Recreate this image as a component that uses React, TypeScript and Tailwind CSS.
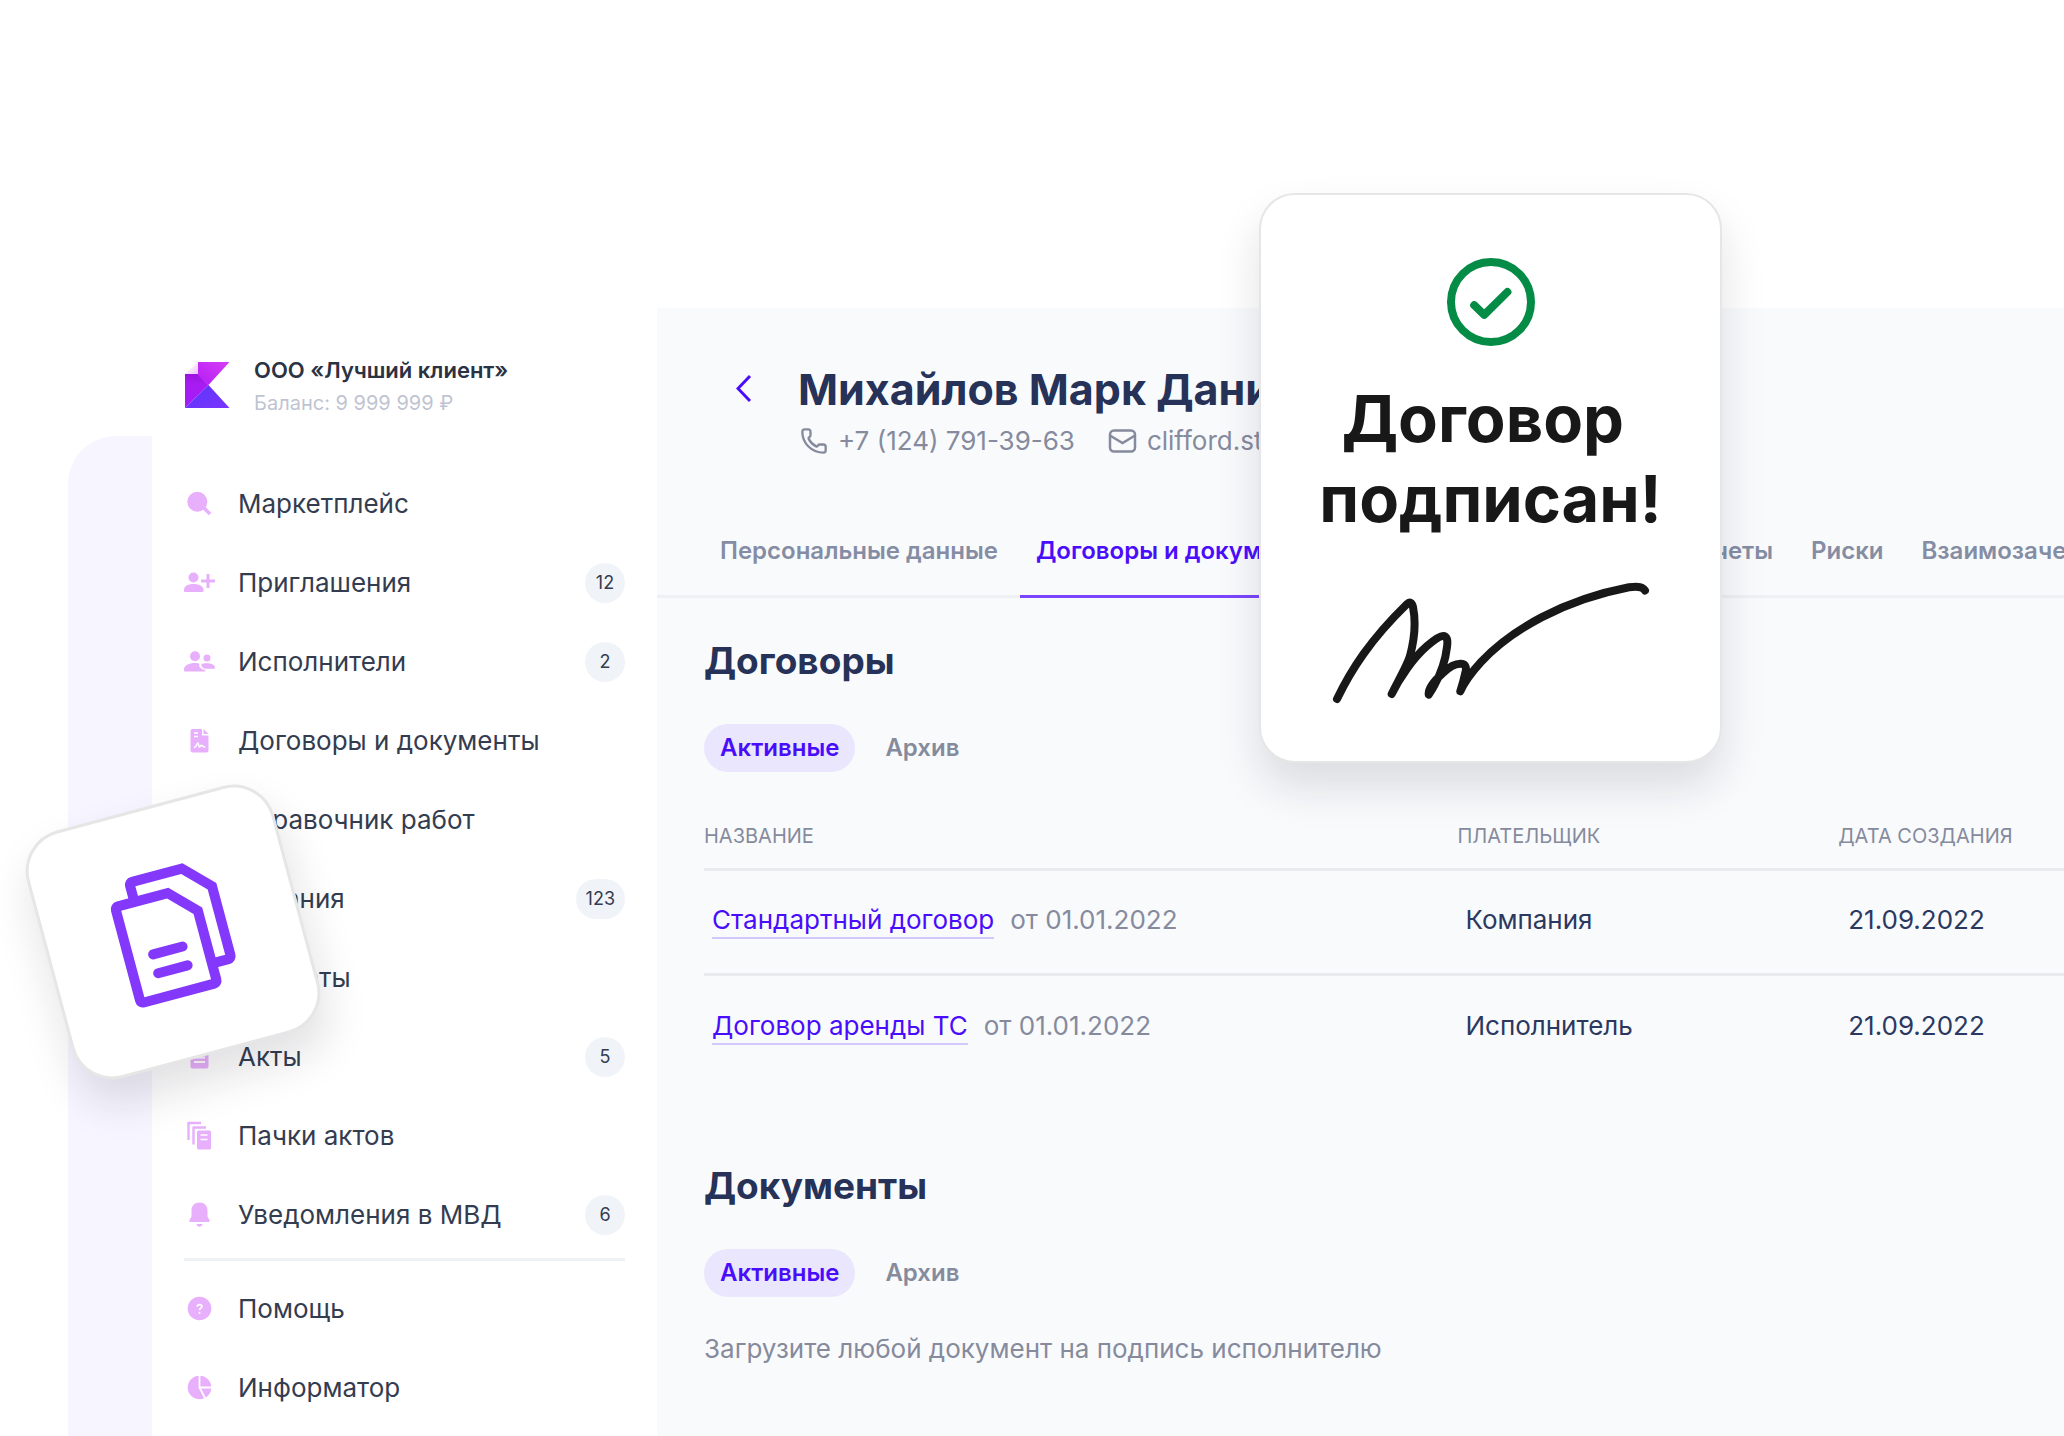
import type { ReactNode } from 'react';
import { Phone } from 'lucide-react';

interface NavItem {
    label: string;
    icon: ReactNode;
    count?: number;
}

interface Contract {
    name: string;
    from: string;
    payer: string;
    created: string;
}

const fileIcon = (
    <>
        <path d="M8.500 4H18v6.500h6.500v15a2 2 0 0 1-2 2h-14a2 2 0 0 1-2-2V6a2 2 0 0 1 2-2z" />
        <path d="M19.500 4l5 5h-5z" />
        <path d="M10 21h11M10 16.500h11" stroke="#fff" strokeWidth="2" />
    </>
);

const navItems: NavItem[] = [
    {
        label: 'Маркетплейс',
        icon: (
            <>
                <circle cx="13.300" cy="13.700" r="10" />
                <path d="M20 20l6 6" stroke="currentColor" strokeWidth="3.500" />
            </>
        )
    },
    {
        label: 'Приглашения',
        count: 12,
        icon: (
            <>
                <circle cx="9.500" cy="10.500" r="5" />
                <path d="M0 23c0-4 4-6 9.500-6s10 2 10 6v1a1 1 0 0 1-1 1H1a1 1 0 0 1-1-1z" />
                <path d="M24 7v14M17 14h14" stroke="currentColor" strokeWidth="3" />
            </>
        )
    },
    {
        label: 'Исполнители',
        count: 2,
        icon: (
            <>
                <circle cx="11" cy="10.300" r="5" />
                <circle cx="23" cy="12" r="3.500" />
                <path d="M0 23.500c0-4 5-6.500 11-6.500 2 0 3.500.3 4.500.7-1 2.800.5 5.300 5.500 6.300.7 1.300 0 1.500-1 1.500H1a1 1 0 0 1-1-1z" />
                <path d="M17.500 17.800c4-1.300 13.500-1 13.500 4 0 .6-.4 1-1 1h-8c-3 0-5-2.500-4.500-5z" />
            </>
        )
    },
    {
        label: 'Договоры и документы',
        icon: (
            <>
                <path d="M8.500 4H18v6.500h6.500v15a2 2 0 0 1-2 2h-14a2 2 0 0 1-2-2V6a2 2 0 0 1 2-2z" />
                <path d="M19.500 4l5 5h-5z" />
                <path
                    d="M10 8h4M10 11.500h4M10 22.500c2.500 0 2.800-4.500 3.800-4.500s.7 4 1.700 4 1-1.700 2-1.700 1 1.700 3.800 1.700"
                    stroke="#fff" strokeWidth="1.600" fill="none"
                />
            </>
        )
    },
    { label: 'Справочник работ', icon: fileIcon },
    { label: 'Задания', count: 123, icon: fileIcon },
    { label: 'Выплаты', icon: fileIcon },
    { label: 'Акты', count: 5, icon: fileIcon },
    {
        label: 'Пачки актов',
        icon: (
            <>
                <path d="M4.500 20V3h12.500M9.500 24.500V7.500h12.500" stroke="currentColor" strokeWidth="2.400" strokeLinejoin="round" fill="none" />
                <rect x="13" y="10.500" width="14" height="19" rx="1.500" />
                <path d="M16.500 15h7M16.500 19.500h7" stroke="#fff" strokeWidth="1.600" />
            </>
        )
    },
    {
        label: 'Уведомления в МВД',
        count: 6,
        icon: (
            <>
                <path d="M15.500 3.500c5 0 8 3.500 8 8v6l2 3.500c.5 1 0 2-1 2h-18c-1 0-1.500-1-1-2l2-3.500v-6c0-4.500 3-8 8-8z" />
                <path d="M12.500 25h6c-.5 1.800-1.600 2.700-3 2.700s-2.500-.9-3-2.700z" />
            </>
        )
    }
];

const extraItems: NavItem[] = [
    {
        label: 'Помощь',
        icon: (
            <>
                <circle cx="15.500" cy="15.500" r="11.800" />
                <path d="M13.300 13.800c0-3 4.600-2.800 4.600-.2 0 1.700-2.400 1.700-2.400 3.500M15.500 18.700v2" stroke="#fff" strokeWidth="1.700" fill="none" />
            </>
        )
    },
    {
        label: 'Информатор',
        icon: (
            <>
                <circle cx="15.500" cy="15.500" r="11.800" />
                <path d="M15.500 3v12.500H28M15.500 15.500l6 11.500" stroke="#fff" strokeWidth="1.800" fill="none" />
            </>
        )
    }
];

const tabs = ['Персональные данные', 'Договоры и документы', 'Задания и пачки актов', 'Расчеты', 'Риски', 'Взаимозачеты'];

const contracts: Contract[] = [
    { name: 'Стандартный договор', from: 'от 01.01.2022', payer: 'Компания', created: '21.09.2022' },
    { name: 'Договор аренды ТС', from: 'от 01.01.2022', payer: 'Исполнитель', created: '21.09.2022' }
];

function Logo() {
    return (
        <svg className="mt-2 h-[46px] w-[46px] flex-shrink-0" viewBox="0 0 46 46">
            <defs>
                <linearGradient id="logoTop" x1="1" y1="0" x2="0" y2="1">
                    <stop offset="0" stopColor="#d63df5" />
                    <stop offset="1" stopColor="#b31df5" />
                </linearGradient>
                <linearGradient id="logoLeft" x1="0" y1="0" x2="0" y2="1">
                    <stop offset="0" stopColor="#9a14dc" />
                    <stop offset="0.3" stopColor="#a81cf2" />
                    <stop offset="1" stopColor="#a31bfb" />
                </linearGradient>
                <linearGradient id="logoBottom" x1="0" y1="0" x2="1" y2="1">
                    <stop offset="0" stopColor="#5a36fb" />
                    <stop offset="1" stopColor="#7b34fd" />
                </linearGradient>
                <linearGradient id="logoFold" x1="0" y1="0" x2="1" y2="1">
                    <stop offset="0.400" stopColor="#fbf3fe" />
                    <stop offset="1" stopColor="#eebffa" />
                </linearGradient>
            </defs>
            <path d="M14 0h31.500L24.500 23 12 12z" fill="url(#logoTop)" />
            <path d="M1 12h12l11.500 11L1 46z" fill="url(#logoLeft)" />
            <path d="M24.500 23L45.500 46H1z" fill="url(#logoBottom)" />
            <path d="M0 0h14v12H0z" fill="#fff" />
            <path d="M14 0v12H1z" fill="url(#logoFold)" />
        </svg>
    );
}

function NavRow({ item }: { item: NavItem }) {
    return (
        <li>
            <a href="#" className="flex h-[79px] items-center gap-[22px]">
                <svg className="h-8 w-8 flex-shrink-0 text-[#e8affc]" viewBox="0 0 32 32" fill="currentColor">
                    {item.icon}
                </svg>
                <span className="flex-1 whitespace-nowrap text-[26px] leading-8 text-[#343c50]">{item.label}</span>
                {item.count !== undefined && (
                    <span className="flex h-10 min-w-10 items-center justify-center rounded-full bg-[#f0f4f9] px-[10px] text-[18px] text-[#343c50]">
                        {item.count}
                    </span>
                )}
            </a>
        </li>
    );
}

function Sidebar() {
    return (
        <aside className="w-[505px] flex-shrink-0 bg-white px-8 pt-[46px]">
            <div className="flex items-start gap-6">
                <Logo />
                <div className="whitespace-nowrap">
                    <p className="text-[22px] font-semibold leading-8 text-[#2a3244]">ООО «Лучший клиент»</p>
                    <p className="text-[20px] leading-[34px] text-[#bfc4d2]">Баланс: 9 999 999 ₽</p>
                </div>
            </div>
            <nav className="mt-11">
                <ul>
                    {navItems.map(item => <NavRow key={item.label} item={item} />)}
                </ul>
                <hr className="mb-2 mt-1 border-t-[3px] border-[#eff2f5]" />
                <ul>
                    {extraItems.map(item => <NavRow key={item.label} item={item} />)}
                </ul>
            </nav>
        </aside>
    );
}

function StatusFilter() {
    return (
        <div className="mt-[39px] flex gap-3.5 text-[24px] font-semibold leading-8">
            <button type="button" className="h-12 rounded-full bg-[#eae6fd] px-4 text-[#4a0dfb]">Активные</button>
            <button type="button" className="h-12 px-4 text-[#858b9c]">Архив</button>
        </div>
    );
}

function ProfileHeader() {
    return (
        <header className="flex whitespace-nowrap pl-[79px] pt-[53px]">
            <button type="button" aria-label="Назад" className="mr-[46px] mt-3 h-8 w-4 flex-shrink-0">
                <svg viewBox="0 0 16 32" fill="none" stroke="#4a0dfb" strokeWidth="3">
                    <path d="M14 3L2 15.500l12 12.500" />
                </svg>
            </button>
            <div>
                <h1 className="text-[43px] font-bold leading-[56px] text-[#263257]">Михайлов Марк Данилович</h1>
                <div className="mt-2 flex gap-8 pl-0.5 text-[26px] leading-8 text-[#858b9c]">
                    <span className="flex items-center gap-2.5">
                        <Phone className="h-7 w-7" strokeWidth={2} />
                        +7 (124) 791-39-63
                    </span>
                    <span className="flex items-center gap-2">
                        <svg className="h-8 w-8" viewBox="0 0 32 32" fill="none" stroke="currentColor" strokeWidth="2.500">
                            <rect x="3" y="5.500" width="25" height="21" rx="4" />
                            <path d="M3 10.500l12.500 7.500L28 10.500" />
                        </svg>
                        clifford.stone@mail.ru
                    </span>
                </div>
            </div>
        </header>
    );
}

function ContractsTable() {
    return (
        <table className="w-full table-fixed text-left">
            <thead>
                <tr className="text-[20px] leading-7 text-[#858b9c]">
                    <th className="w-[55.4%] pb-[18px] pt-[50px] font-normal">НАЗВАНИЕ</th>
                    <th className="w-[28%] pb-[18px] pt-[50px] font-normal">ПЛАТЕЛЬЩИК</th>
                    <th className="whitespace-nowrap pb-[18px] pt-[50px] font-normal">ДАТА СОЗДАНИЯ</th>
                </tr>
            </thead>
            <tbody className="text-[26px] leading-8 text-[#2b3860]">
                {contracts.map(row => (
                    <tr key={row.name} className="h-[105px] border-t-[3px] border-[#e8eaed]">
                        <td className="pb-1 pl-2">
                            <a href="#" className="border-b-2 border-[#d3c8fb] pb-0.5 text-[#4a0dfb]">{row.name}</a>
                            <span className="ml-4 text-[#858b9c]">{row.from}</span>
                        </td>
                        <td className="pb-1 pl-2">{row.payer}</td>
                        <td className="pb-1 pl-2.5">{row.created}</td>
                    </tr>
                ))}
            </tbody>
        </table>
    );
}

function SignedCard() {
    return (
        <div className="absolute left-[61%] top-[193px] flex w-[463px] flex-col items-center rounded-[36px] border-2 border-[#e6e6e6] bg-white pb-14 pt-[59px] shadow-[0_24px_44px_rgba(20,24,40,0.13)]">
            <svg className="h-24 w-24" viewBox="0 0 24 24" fill="none" stroke="#048b45" strokeWidth="2" strokeLinecap="round" strokeLinejoin="round">
                <circle cx="12" cy="12" r="10" />
                <path d="M7.800 12.800l2.500 2.400 5.800-5.700" />
            </svg>
            <p className="mt-[29px] text-center text-[65px] font-bold leading-[80px] text-[#181818]">
                Договор&nbsp;<br />подписан!
            </p>
            <svg className="mt-[42px] h-[124px] w-80" viewBox="0 0 320 124" fill="none" stroke="#181818" strokeWidth="8" strokeLinecap="round" strokeLinejoin="round">
                <path d="M6 118C20 89 39 59 76 23C79 20 81 22 82 26C85 41 83 60 79 75C76 85 66 102 60.700 113C68 98 82 77 96 65C103 59 109 55 112 55C116 55 117 59 116 66C114 84 108 96 103 105C101 109 98.500 112 97.700 113.700C97 107 104 99 112 92C119 85 125 82.500 130 82.700C135 83 136 87 134 93C132.500 100 131 105 129.300 110.300C133 102 139 93 150 81C180 49 232 19 298 6.300C308 5 312 6 314 9.500" />
            </svg>
        </div>
    );
}

function DocumentsCard() {
    // outer contour plus a sharp inner cut-out
    const sheet = 'M-46.500-44H7L34.500-16V57.500a8 8 0 0 1-8 8H-46.500a8 8 0 0 1-8-8V-36a8 8 0 0 1 8-8z';
    const hole = 'M-44.500-34H3L24.500-12V55.500H-44.500z';

    return (
        <div className="absolute left-[45px] top-[804px] flex h-64 w-64 -rotate-15 items-center justify-center rounded-[42px] border-[3px] border-[#e6e6e6] bg-white shadow-[0_24px_44px_rgba(20,24,40,0.13)]">
            <svg className="h-[150px] w-32" viewBox="-64 -75 128 150" fill="#8338fb">
                <g transform="translate(20 -20)">
                    <path d={sheet} />
                    <path d={hole} fill="#fff" />
                </g>
                <path d={sheet} />
                <path d={hole} fill="#fff" />
                <path d="M-25 16.500H5.500M-25 36H5.500" stroke="#8338fb" strokeWidth="10" strokeLinecap="round" />
            </svg>
        </div>
    );
}

export default function App() {
    return (
        <div className="relative flex min-h-screen overflow-hidden bg-white pt-[308px] font-['Inter',sans-serif]">
            <div className="ml-[68px] mt-32 w-[84px] flex-shrink-0 rounded-tl-[48px] bg-[#f7f5ff]" />
            <Sidebar />
            <main className="min-w-0 flex-1 overflow-hidden bg-[#f9fafc]">
                <ProfileHeader />
                <div className="mt-[78px] flex gap-1.5 whitespace-nowrap border-b-[3px] border-[#eef0f3] pl-[47px]">
                    {tabs.map((tab, i) => (
                        <button
                            key={tab} type="button"
                            className={i === 1
                                ? '-mb-[3px] border-b-[3px] border-[#7a45fd] px-4 pb-7 text-[24px] font-semibold leading-8 text-[#4a0dfb]'
                                : 'px-4 pb-7 text-[24px] font-semibold leading-8 text-[#858da4]'}
                        >
                            {tab}
                        </button>
                    ))}
                </div>
                <section className="pl-[47px] pt-[39px]">
                    <h2 className="text-[37px] font-bold leading-[48px] text-[#263257]">Договоры</h2>
                    <StatusFilter />
                    <ContractsTable />
                </section>
                <section className="pl-[47px] pt-[82px]">
                    <h2 className="text-[37px] font-bold leading-[48px] text-[#263257]">Документы</h2>
                    <StatusFilter />
                    <p className="mt-9 text-[26px] leading-8 text-[#858b9c]">Загрузите любой документ на подпись исполнителю</p>
                </section>
            </main>
            <SignedCard />
            <DocumentsCard />
        </div>
    );
}
